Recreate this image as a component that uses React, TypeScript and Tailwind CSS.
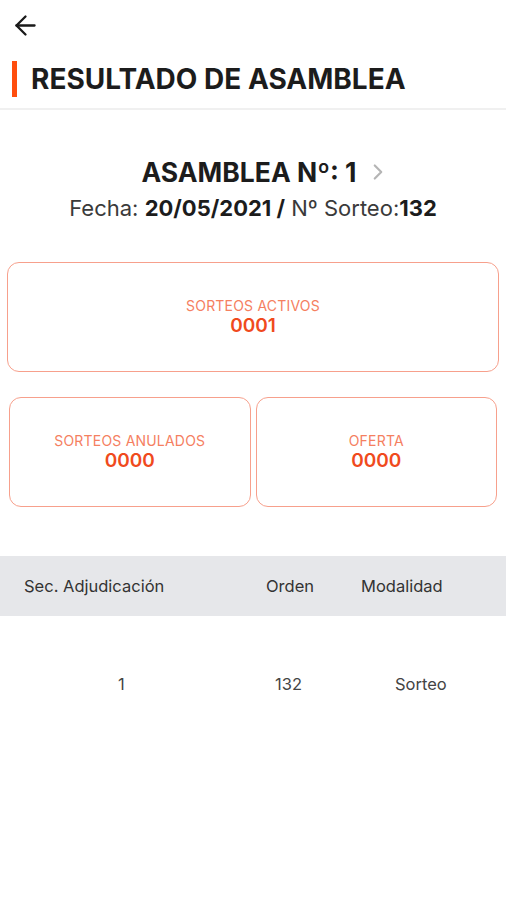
import { ArrowLeft, ChevronRight } from "lucide-react";

const font = { fontFamily: "Inter, 'Liberation Sans', sans-serif" };

function StatCard({ label, value, className }: { label: string; value: string; className?: string }) {
  return (
    <div
      className={
        "flex flex-col items-center justify-center rounded-[12px] border border-[#f7a08c] h-[110px] " +
        (className ?? "")
      }
    >
      <span className="text-[14px] leading-[18px] text-[#f5805f] tracking-[0.2px]">{label}</span>
      <span className="text-[19px] leading-[22px] font-semibold text-[#f04a1d]">{value}</span>
    </div>
  );
}

export default function App() {
  return (
    <div className="w-[506px] h-[900px] bg-white flex flex-col" style={font}>
      {/* Top bar */}
      <div className="h-[50px] flex items-center pl-[10px]">
        <ArrowLeft className="w-[31px] h-[31px] text-[#1a1a1a]" strokeWidth={1.8} />
      </div>

      {/* Title */}
      <div className="flex items-center gap-[14px] pl-[12px] h-[48px] mt-[5px]">
        <span className="w-[5px] h-[36px] bg-[#ff4e0e]" />
        <h1 className="text-[28px] font-bold text-[#1c1c1c]">RESULTADO DE ASAMBLEA</h1>
      </div>
      <div className="mt-[5px] h-[2px] bg-[#f0f0f0]" />

      {/* Asamblea header */}
      <div className="flex flex-col items-center mt-[46px]">
        <div className="flex items-center gap-[8px] pl-[26px]">
          <span className="text-[26.5px] leading-[32px] font-bold text-[#1c1c1c]">ASAMBLEA Nº: 1</span>
          <ChevronRight className="w-[26px] h-[26px] text-[#b5b5b5]" strokeWidth={2} />
        </div>
        <p className="mt-[6px] text-[22px] leading-[28px] text-[#3a3a3a]">
          Fecha: <span className="font-bold text-[#1c1c1c]">20/05/2021 /</span> Nº Sorteo:
          <span className="font-bold text-[#1c1c1c]">132</span>
        </p>
      </div>

      {/* Cards */}
      <div className="px-[7px] mt-[40px]">
        <StatCard label="SORTEOS ACTIVOS" value="0001" />
      </div>
      <div className="grid grid-cols-2 gap-[5px] px-[9px] mt-[25px]">
        <StatCard label="SORTEOS ANULADOS" value="0000" />
        <StatCard label="OFERTA" value="0000" />
      </div>

      {/* Table */}
      <div className="mt-[49px] h-[60px] bg-[#e6e7ea] grid grid-cols-[242px_94px_1fr] items-center text-[16.5px] text-[#333]">
        <span className="pl-[24px]">Sec. Adjudicación</span>
        <span className="pl-[24px]">Orden</span>
        <span className="pl-[25px]">Modalidad</span>
      </div>
      <div className="h-[136px] grid grid-cols-[242px_94px_1fr] items-center text-[16.5px] text-[#444]">
        <span className="pl-[118px]">1</span>
        <span className="pl-[33px]">132</span>
        <span className="pl-[59px]">Sorteo</span>
      </div>
    </div>
  );
}
